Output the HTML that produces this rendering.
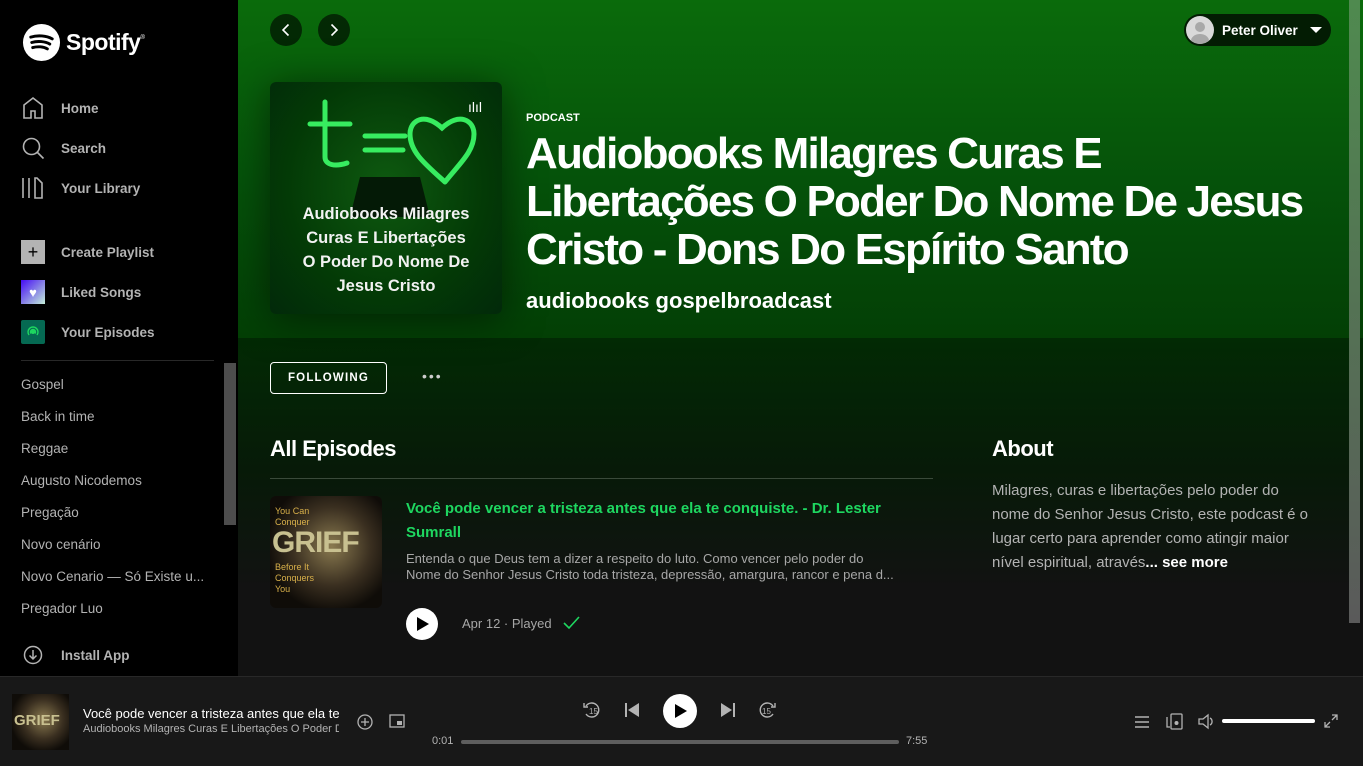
<!DOCTYPE html>
<html><head><meta charset="utf-8"><style>
*{margin:0;padding:0;box-sizing:border-box}
body{width:1363px;height:766px;overflow:hidden;background:#121212;font-family:"Liberation Sans",sans-serif;position:relative;color:#fff}
.side{position:absolute;left:0;top:0;width:238px;height:676px;background:#000}
.nav{position:absolute;left:21px;font-weight:bold;font-size:13.5px;color:#b3b3b3;display:flex;align-items:center}
.nav .ic{width:24px;height:24px;margin-right:16px;display:flex;align-items:center;justify-content:center}
.pl{position:absolute;left:21px;font-size:13.5px;color:#b3b3b3}
.main{position:absolute;left:238px;top:0;width:1125px;height:676px;background:linear-gradient(#0a6b0b 0px,#05520a 180px,#033f05 338px,#022a04 338px,#071a08 470px,#121212 590px)}
.abs{position:absolute}
.circ{width:32px;height:32px;border-radius:50%;background:rgba(0,0,0,.6);display:flex;align-items:center;justify-content:center}
.bar{position:absolute;left:0;top:676px;width:1363px;height:90px;background:#181818;border-top:1px solid #282828}
</style></head><body>
<div class="side">
 <div class="abs" style="left:22px;top:23px;display:flex;align-items:center">
  <svg width="39" height="39" viewBox="0 0 40 40"><circle cx="20" cy="20" r="19" fill="#fff"/><path d="M9 14.5c7-2.2 16-1.6 22 1.8M10 20c6-1.8 13.5-1.2 18.5 1.6M11 25.2c5-1.4 11-1 15 1.3" stroke="#000" stroke-width="3" fill="none" stroke-linecap="round"/></svg>
  <span style="font-weight:bold;font-size:23px;margin-left:5px;letter-spacing:-0.5px">Spotify</span><span style="font-size:6px;align-self:flex-start;margin-top:12px">®</span>
 </div>
 <div class="nav" style="top:96px"><div class="ic"><svg width="24" height="24" viewBox="0 0 24 24"><path d="M3 22V9l9-7 9 7v13h-7v-7h-4v7z" fill="none" stroke="#b3b3b3" stroke-width="1.6"/></svg></div>Home</div>
 <div class="nav" style="top:136px"><div class="ic"><svg width="24" height="24" viewBox="0 0 24 24"><circle cx="10.5" cy="10.5" r="8" fill="none" stroke="#b3b3b3" stroke-width="1.6"/><path d="M16.5 16.5l6 6" stroke="#b3b3b3" stroke-width="1.6"/></svg></div>Search</div>
 <div class="nav" style="top:176px"><div class="ic"><svg width="24" height="24" viewBox="0 0 24 24"><path d="M2 2v20M8 2v20M14 2v20h7V7l-5-5z" fill="none" stroke="#b3b3b3" stroke-width="1.6"/></svg></div>Your Library</div>
 <div class="nav" style="top:240px"><div class="ic" style="background:#b3b3b3;color:#000;font-size:18px;font-weight:normal">+</div>Create Playlist</div>
 <div class="nav" style="top:280px"><div class="ic" style="background:linear-gradient(135deg,#450af5,#c4efd9)"><span style="color:#fff;font-size:13px">♥</span></div>Liked Songs</div>
 <div class="nav" style="top:320px"><div class="ic" style="background:#056952;border-radius:2px"><svg width="14" height="14" viewBox="0 0 14 14"><circle cx="7" cy="7" r="2" fill="#1ed760"/><path d="M3 10A5 5 0 1 1 11 10M5 8.5A2.5 2.5 0 1 1 9 8.5" stroke="#1ed760" stroke-width="1.4" fill="none"/></svg></div>Your Episodes</div>
 <div class="abs" style="left:21px;top:360px;width:193px;height:1px;background:#282828"></div>
 <div class="abs" style="left:224px;top:363px;width:12px;height:162px;background:#4d4d4d"></div>
 <div class="pl" style="top:377px">Gospel</div>
 <div class="pl" style="top:409px">Back in time</div>
 <div class="pl" style="top:441px">Reggae</div>
 <div class="pl" style="top:473px">Augusto Nicodemos</div>
 <div class="pl" style="top:505px">Pregação</div>
 <div class="pl" style="top:537px">Novo cenário</div>
 <div class="pl" style="top:569px">Novo Cenario — Só Existe u...</div>
 <div class="pl" style="top:601px">Pregador Luo</div>
 <div class="nav" style="top:643px"><div class="ic"><svg width="20" height="20" viewBox="0 0 20 20"><circle cx="10" cy="10" r="8.5" fill="none" stroke="#b3b3b3" stroke-width="1.5"/><path d="M10 5v9M6.5 10.5 10 14l3.5-3.5" fill="none" stroke="#b3b3b3" stroke-width="1.5"/></svg></div>Install App</div>
</div>
<div class="main"></div>
<div class="abs" style="left:1349px;top:0;width:11px;height:623px;background:linear-gradient(#4f8a4f,#5a5a5a)"></div>
<div class="abs circ" style="left:270px;top:14px"><svg width="14" height="14" viewBox="0 0 14 14"><path d="M9.5 1.5 4 7l5.5 5.5" stroke="#fff" stroke-width="1.6" fill="none"/></svg></div>
<div class="abs circ" style="left:318px;top:14px"><svg width="14" height="14" viewBox="0 0 14 14"><path d="M4.5 1.5 10 7l-5.5 5.5" stroke="#fff" stroke-width="1.6" fill="none"/></svg></div>
<div class="abs" style="left:1184px;top:14px;width:147px;height:32px;border-radius:16px;background:#031c03;display:flex;align-items:center">
 <div style="width:28px;height:28px;border-radius:50%;background:#d9d9d9;margin-left:2px;overflow:hidden;position:relative"><div style="position:absolute;left:9px;top:6px;width:10px;height:10px;border-radius:50%;background:#a8a8a8"></div><div style="position:absolute;left:5px;top:18px;width:18px;height:14px;border-radius:50%;background:#a8a8a8"></div></div>
 <span style="font-weight:bold;font-size:13.5px;margin-left:8px">Peter Oliver</span>
 <svg width="12" height="8" style="margin-left:12px" viewBox="0 0 12 8"><path d="M0 1h12L6 7z" fill="#fff"/></svg>
</div>
<div class="abs" style="left:270px;top:82px;width:232px;height:232px;border-radius:6px;background:radial-gradient(ellipse at 50% 45%,#0e5a10,#033a06 60%,#02290a);overflow:hidden;box-shadow:0 4px 40px rgba(0,0,0,.5)">
 <svg class="abs" style="left:0;top:0" width="232" height="232" viewBox="0 0 232 232"><g stroke="#3dff6a" stroke-width="5" fill="none" stroke-linecap="round" opacity=".9"><path d="M55 20v55c0 8 10 10 22 6M40 42h40"/><path d="M95 54h40M95 68h38"/><path d="M175 100c-20-18-35-30-35-48 0-14 15-22 32-6 17-16 32-8 32 6 0 18-15 30-29 48"/></g><path d="M90 95h60l10 40H80z" fill="#041a06"/><text x="205" y="30" fill="#fff" font-size="14" text-anchor="middle">ılıl</text></svg>
 <div class="abs" style="left:0;top:120px;width:232px;text-align:center;font-size:16.5px;line-height:24px;font-weight:bold;color:#f2f2f2">Audiobooks Milagres<br>Curas E Libertações<br>O Poder Do Nome De<br>Jesus Cristo</div>
</div>
<div class="abs" style="left:526px;top:112px;font-size:11px;font-weight:bold">PODCAST</div>
<div class="abs" style="left:526px;top:130px;font-size:44px;line-height:48px;font-weight:bold;letter-spacing:-1.8px;white-space:nowrap">Audiobooks Milagres Curas E<br>Libertações O Poder Do Nome De Jesus<br>Cristo - Dons Do Espírito Santo</div>
<div class="abs" style="left:526px;top:288px;font-size:22px;font-weight:bold">audiobooks gospelbroadcast</div>
<div class="abs" style="left:270px;top:362px;width:117px;height:32px;border:1px solid #fff;border-radius:4px;font-size:11.5px;font-weight:bold;letter-spacing:1.2px;display:flex;align-items:center;justify-content:center">FOLLOWING</div>
<div class="abs" style="left:422px;top:368px;font-size:14px;letter-spacing:2px;color:#ccc">•••</div>
<div class="abs" style="left:270px;top:436px;font-size:22px;font-weight:bold;letter-spacing:-0.5px">All Episodes</div>
<div class="abs" style="left:270px;top:478px;width:663px;height:1px;background:#3a4a3a"></div>
<div class="abs" style="left:270px;top:496px;width:112px;height:112px;border-radius:6px;background:radial-gradient(circle at 55% 45%,#8a7a50,#3a2f20 45%,#0f0c08 75%);overflow:hidden">
 <div class="abs" style="left:5px;top:10px;color:#d8b04a;font-size:9px;line-height:11px">You Can<br>Conquer</div>
 <div class="abs" style="left:2px;top:30px;color:#c8c090;font-size:30px;font-weight:bold;letter-spacing:-1px">GRIEF</div>
 <div class="abs" style="left:5px;top:66px;color:#d8b04a;font-size:9px;line-height:11px">Before It<br>Conquers<br>You</div>
</div>
<div class="abs" style="left:406px;top:497px;width:520px;font-size:15px;line-height:24px;font-weight:bold;color:#1ed760">Você pode vencer a tristeza antes que ela te conquiste. - Dr. Lester Sumrall</div>
<div class="abs" style="left:406px;top:551px;width:527px;font-size:13px;line-height:16px;color:#a7a7a7;height:32px;overflow:hidden">Entenda o que Deus tem a dizer a respeito do luto. Como vencer pelo poder do<br>Nome do Senhor Jesus Cristo toda tristeza, depressão, amargura, rancor e pena d...</div>
<div class="abs" style="left:406px;top:608px;width:32px;height:32px;border-radius:50%;background:#fff"><svg class="abs" style="left:10px;top:9px" width="14" height="14" viewBox="0 0 14 14"><path d="M1 0l12 7-12 7z" fill="#000"/></svg></div>
<div class="abs" style="left:462px;top:616px;font-size:13px;color:#a7a7a7">Apr 12 · Played</div>
<svg class="abs" style="left:563px;top:616px" width="17" height="14" viewBox="0 0 17 14"><path d="M1 7l5 5L16 1" stroke="#1ed760" stroke-width="1.6" fill="none"/></svg>
<div class="abs" style="left:992px;top:436px;font-size:22px;font-weight:bold;letter-spacing:-0.5px">About</div>
<div class="abs" style="left:992px;top:479px;width:325px;font-size:15px;line-height:24px;color:#b3b3b3">Milagres, curas e libertações pelo poder do nome do Senhor Jesus Cristo, este podcast é o lugar certo para aprender como atingir maior nível espiritual, através<b style="color:#fff">... see more</b></div>

<div class="bar">
 <div class="abs" style="left:12px;top:17px;width:57px;height:56px;background:radial-gradient(circle at 55% 45%,#8a7a50,#3a2f20 45%,#0f0c08 75%)"><div class="abs" style="left:2px;top:18px;color:#c8c090;font-size:15px;font-weight:bold">GRIEF</div></div>
 <div class="abs" style="left:83px;top:29px;width:256px;overflow:hidden;white-space:nowrap;font-size:13px">Você pode vencer a tristeza antes que ela te conquiste</div>
 <div class="abs" style="left:83px;top:46px;width:256px;overflow:hidden;white-space:nowrap;font-size:11px;color:#b3b3b3">Audiobooks Milagres Curas E Libertações O Poder Do Nome</div>
 <svg class="abs" style="left:357px;top:37px" width="16" height="16" viewBox="0 0 16 16"><circle cx="8" cy="8" r="7" stroke="#b3b3b3" stroke-width="1.3" fill="none"/><path d="M8 4v8M4 8h8" stroke="#b3b3b3" stroke-width="1.3"/></svg>
 <svg class="abs" style="left:389px;top:37px" width="16" height="14" viewBox="0 0 16 14"><rect x="1" y="1" width="14" height="12" stroke="#b3b3b3" stroke-width="1.3" fill="none"/><rect x="8" y="7" width="5" height="4" fill="#b3b3b3"/></svg>
 <svg class="abs" style="left:582px;top:24px" width="18" height="18" viewBox="0 0 18 18"><path d="M4 5a7 7 0 1 1 0 8" stroke="#b3b3b3" stroke-width="1.4" fill="none"/><path d="M2 2v4h4" stroke="#b3b3b3" stroke-width="1.4" fill="none"/><text x="7" y="13" font-size="8" fill="#b3b3b3" font-family="Liberation Sans">15</text></svg>
 <svg class="abs" style="left:624px;top:25px" width="16" height="16" viewBox="0 0 16 16"><rect x="1" y="1" width="2" height="14" fill="#b3b3b3"/><path d="M15 1v14L4 8z" fill="#b3b3b3"/></svg>
 <div class="abs" style="left:663px;top:17px;width:34px;height:34px;border-radius:50%;background:#fff"><svg class="abs" style="left:11px;top:10px" width="14" height="14" viewBox="0 0 14 14"><path d="M1 0l12 7-12 7z" fill="#000"/></svg></div>
 <svg class="abs" style="left:720px;top:25px" width="16" height="16" viewBox="0 0 16 16"><rect x="13" y="1" width="2" height="14" fill="#b3b3b3"/><path d="M1 1v14l11-7z" fill="#b3b3b3"/></svg>
 <svg class="abs" style="left:759px;top:24px" width="18" height="18" viewBox="0 0 18 18"><path d="M14 5a7 7 0 1 0 0 8" stroke="#b3b3b3" stroke-width="1.4" fill="none"/><path d="M16 2v4h-4" stroke="#b3b3b3" stroke-width="1.4" fill="none"/><text x="3" y="13" font-size="8" fill="#b3b3b3" font-family="Liberation Sans">15</text></svg>
 <div class="abs" style="left:432px;top:58px;font-size:11px;color:#b3b3b3">0:01</div>
 <div class="abs" style="left:461px;top:63px;width:438px;height:4px;border-radius:2px;background:#5e5e5e"></div>
 <div class="abs" style="left:906px;top:58px;font-size:11px;color:#b3b3b3">7:55</div>
 <svg class="abs" style="left:1134px;top:37px" width="16" height="16" viewBox="0 0 16 16"><path d="M1 3h14M1 8h14M1 13h14" stroke="#b3b3b3" stroke-width="1.4"/></svg>
 <svg class="abs" style="left:1166px;top:36px" width="17" height="17" viewBox="0 0 17 17"><rect x="5" y="1" width="11" height="15" rx="1" stroke="#b3b3b3" stroke-width="1.3" fill="none"/><path d="M1 4v10h3" stroke="#b3b3b3" stroke-width="1.3" fill="none"/><circle cx="10.5" cy="10" r="2" fill="#b3b3b3"/></svg>
 <svg class="abs" style="left:1198px;top:36px" width="17" height="17" viewBox="0 0 17 17"><path d="M1 6h4l5-4v13l-5-4H1z" stroke="#b3b3b3" stroke-width="1.3" fill="none"/><path d="M12 5a4 4 0 0 1 0 7" stroke="#b3b3b3" stroke-width="1.3" fill="none"/></svg>
 <div class="abs" style="left:1222px;top:42px;width:93px;height:4px;border-radius:2px;background:#fff"></div>
 <svg class="abs" style="left:1324px;top:37px" width="14" height="14" viewBox="0 0 14 14"><path d="M8 1h5v5M13 1 8 6M6 13H1V8M1 13l5-5" stroke="#b3b3b3" stroke-width="1.3" fill="none"/></svg>
</div>
</body></html>
